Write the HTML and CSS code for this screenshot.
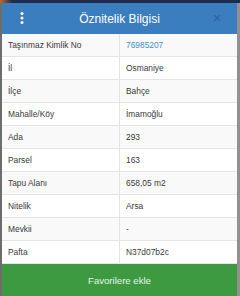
FILE: index.html
```html
<!DOCTYPE html>
<html lang="tr">

<head>
    <meta charset="UTF-8">
    <meta name="viewport" content="width=device-width, initial-scale=1.0">
    <title>Öznitelik Bilgisi</title>
    <link rel="stylesheet" href="styles.css">
</head>

<body>

    <div class="top-strip"></div>

    <div class="modal">
        <header class="modal-header">
            <span class="menu-dots">
                <svg width="4" height="12" viewBox="0 0 4 12">
                    <circle cx="2" cy="1.6" r="1.5" fill="#fff" />
                    <circle cx="2" cy="6" r="1.5" fill="#fff" />
                    <circle cx="2" cy="10.4" r="1.5" fill="#fff" />
                </svg>
            </span>
            <h1 class="modal-title">Öznitelik Bilgisi</h1>
            <span class="close-btn">×</span>
        </header>

        <table class="info-table">
            <tr><td>Taşınmaz Kimlik No</td><td><a href="#">76985207</a></td></tr>
            <tr><td>İl</td><td>Osmaniye</td></tr>
            <tr><td>İlçe</td><td>Bahçe</td></tr>
            <tr><td>Mahalle/Köy</td><td>İmamoğlu</td></tr>
            <tr><td>Ada</td><td>293</td></tr>
            <tr><td>Parsel</td><td>163</td></tr>
            <tr><td>Tapu Alanı</td><td>658,05 m2</td></tr>
            <tr><td>Nitelik</td><td>Arsa</td></tr>
            <tr><td>Mevkii</td><td>-</td></tr>
            <tr><td>Pafta</td><td>N37d07b2c</td></tr>
        </table>

        <button class="fav-btn">Favorilere ekle</button>
    </div>

</body>

</html>
```

FILE: styles.css
```css
body {
    margin: 0;
    padding: 0;
    background-color: #6d6d6d;
    font-family: "Liberation Sans", Arial, sans-serif;
    height: 296px;
    overflow: hidden;
}

.top-strip {
    height: 3px;
    background: linear-gradient(to right, #c06a2c 0, #1f2d4c 12px, #1f2d4c 100%);
}

.modal {
    margin-left: 2px;
    width: 235px;
    background-color: #fff;
    box-shadow: 3px 0 0 rgba(255, 255, 255, 0.25);
}

.modal-header {
    display: flex;
    align-items: center;
    height: 31px;
    background-color: #3b7ec0;
    color: #fff;
}

.menu-dots {
    display: flex;
    width: 40px;
    justify-content: center;
    margin-top: -2px;
}

.modal-title {
    flex: 1;
    margin: 0;
    text-align: center;
    font-size: 12px;
    font-weight: normal;
}

.close-btn {
    width: 40px;
    text-align: center;
    font-size: 14px;
    color: #2a62a0;
    margin-top: -2px;
}

.info-table {
    width: 100%;
    border-collapse: collapse;
    font-size: 8.4px;
    color: #3a3a3a;
}

.info-table tr:nth-child(odd) {
    background-color: #f9f9f9;
}

.info-table td {
    height: 22px;
    padding: 0 6px;
    border-bottom: 1px solid #e4e4e4;
}

.info-table td:first-child {
    width: 105px;
    border-right: 1px solid #e4e4e4;
}

.info-table a {
    color: #4a8cc9;
    text-decoration: none;
}

.fav-btn {
    display: block;
    width: 100%;
    height: 40px;
    border: none;
    background-color: #3d9a41;
    color: #e6f3e6;
    font-family: "Liberation Sans", Arial, sans-serif;
    font-size: 9.6px;
    padding: 0 0 8px;
}
```
